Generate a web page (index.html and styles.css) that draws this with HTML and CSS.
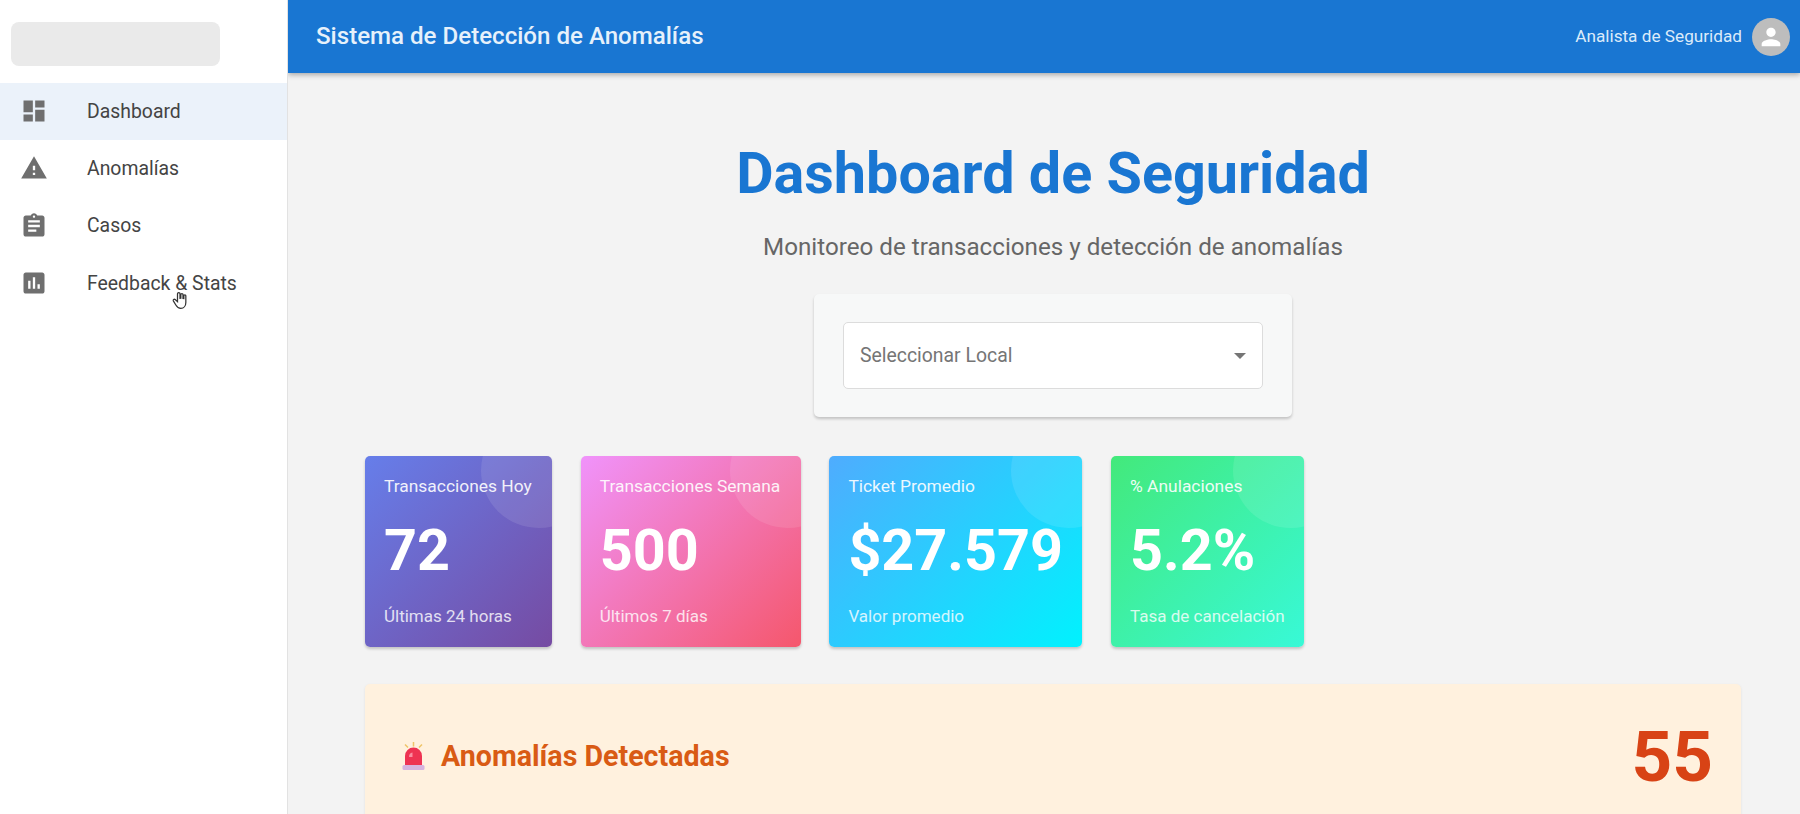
FILE: index.html
```html
<!DOCTYPE html>
<html lang="es">
<head>
  <meta charset="UTF-8">
  <meta name="viewport" content="width=device-width, initial-scale=1.0">
  <title>Sistema de Detección de Anomalías</title>
  <link rel="stylesheet" href="styles.css">
</head>
<body>
  <aside class="sidebar">
    <div class="logo-slot"><div class="logo-blank"></div></div>
    <nav class="nav">
      <a class="nav-item active">
        <svg class="nav-icon" viewBox="0 0 24 24"><path d="M3 13h8V3H3v10zm0 8h8v-6H3v6zm10 0h8V11h-8v10zm0-18v6h8V3h-8z"/></svg>
        <span>Dashboard</span>
      </a>
      <a class="nav-item">
        <svg class="nav-icon" viewBox="0 0 24 24"><path d="M1 21h22L12 2 1 21zm12-3h-2v-2h2v2zm0-4h-2v-4h2v4z"/></svg>
        <span>Anomalías</span>
      </a>
      <a class="nav-item">
        <svg class="nav-icon" viewBox="0 0 24 24"><path d="M19 3h-4.18C14.4 1.84 13.3 1 12 1c-1.3 0-2.4.84-2.82 2H5c-1.1 0-2 .9-2 2v14c0 1.1.9 2 2 2h14c1.1 0 2-.9 2-2V5c0-1.1-.9-2-2-2zm-7 0c.55 0 1 .45 1 1s-.45 1-1 1-1-.45-1-1 .45-1 1-1zm2 14H7v-2h7v2zm3-4H7v-2h10v2zm0-4H7V7h10v2z"/></svg>
        <span>Casos</span>
      </a>
      <a class="nav-item">
        <svg class="nav-icon" viewBox="0 0 24 24"><path d="M19 3H5c-1.1 0-2 .9-2 2v14c0 1.1.9 2 2 2h14c1.1 0 2-.9 2-2V5c0-1.1-.9-2-2-2zM9 17H7v-7h2v7zm4 0h-2V7h2v10zm4 0h-2v-4h2v4z"/></svg>
        <span>Feedback &amp; Stats</span>
      </a>
    </nav>
    <svg class="cursor" viewBox="0 0 24 24"><path d="M9 11V4.5a1.5 1.5 0 0 1 3 0V10l1-.2V5.5a1.3 1.3 0 0 1 2.600 0v4.600l1 .2V7a1.200 1.200 0 0 1 2.400 0v8c0 4-2.500 7-6 7-3 0-4.500-1.300-6-4l-3-5c-.7-1.300 1-2.500 2.200-1.500L9 14z"/></svg>
  </aside>

  <div class="content">
    <header class="topbar">
      <div class="topbar-title">Sistema de Detección de Anomalías</div>
      <div class="user">
        <span>Analista de Seguridad</span>
        <div class="avatar">
          <svg viewBox="0 0 24 24"><path d="M12 12c2.210 0 4-1.790 4-4s-1.790-4-4-4-4 1.790-4 4 1.790 4 4 4zm0 2c-2.670 0-8 1.340-8 4v2h16v-2c0-2.660-5.330-4-8-4z"/></svg>
        </div>
      </div>
    </header>

    <main class="main">
      <h1 class="page-title">Dashboard de Seguridad</h1>
      <p class="page-sub">Monitoreo de transacciones y detección de anomalías</p>

      <div class="filter-panel">
        <div class="select">
          <span>Seleccionar Local</span>
          <div class="caret"></div>
        </div>
      </div>

      <div class="stats">
        <div class="stat stat-purple">
          <div class="stat-label">Transacciones Hoy</div>
          <div class="stat-value">72</div>
          <div class="stat-foot">Últimas 24 horas</div>
        </div>
        <div class="stat stat-pink">
          <div class="stat-label">Transacciones Semana</div>
          <div class="stat-value">500</div>
          <div class="stat-foot">Últimos 7 días</div>
        </div>
        <div class="stat stat-blue">
          <div class="stat-label">Ticket Promedio</div>
          <div class="stat-value">$27.579</div>
          <div class="stat-foot">Valor promedio</div>
        </div>
        <div class="stat stat-green">
          <div class="stat-label">% Anulaciones</div>
          <div class="stat-value">5.2%</div>
          <div class="stat-foot">Tasa de cancelación</div>
        </div>
      </div>

      <section class="anomalies">
        <div class="anomalies-title">
          <svg class="siren" viewBox="0 0 23 28">
            <path d="M11.500 0v4.500M3 2.500l3 3M20 2.500l-3 3" stroke="#efc468" stroke-width="1.500" fill="none"/>
            <path d="M3 24v-10a8.500 8.500 0 0 1 17 0v10z" fill="#ee3352"/>
            <path d="M7 15a4.500 4.500 0 0 1 3.500-4.500v4.500z" fill="#fa8da0"/>
            <rect x="0.500" y="23" width="22" height="5" rx="1.500" fill="#d6b4de"/>
          </svg>
          <span>Anomalías Detectadas</span>
        </div>
        <div class="anomalies-count">55</div>
      </section>
    </main>
  </div>
</body>
</html>
```

FILE: styles.css
```css
* {
  box-sizing: border-box;
}

html, body {
  height: 100%;
}

body {
  display: flex;
  margin: 0;
  overflow: hidden;
  background-color: #f3f3f3;
  font-family: Roboto, Arial, sans-serif;
  color: #444;
}

.sidebar {
  position: relative;
  flex: 0 0 288px;
  background-color: #fff;
  border-right: 1px solid #e2e2e2;
}

.logo-slot {
  height: 82.500px;
  padding: 22px 0 0 11px;
}

.logo-blank {
  width: 209px;
  height: 44px;
  background-color: #eaeaea;
  border-radius: 8px;
}

.nav-item {
  display: flex;
  align-items: center;
  height: 57.300px;
  padding-left: 20px;
  font-size: 19.400px;
}

.nav-item.active {
  background-color: #ebf2fa;
}

.nav-icon {
  flex: 0 0 28px;
  width: 28px;
  height: 28px;
  margin-right: 39px;
  fill: #6f6f6f;
}

.cursor {
  position: absolute;
  top: 288px;
  left: 170px;
  width: 20px;
  height: 24px;
  fill: #fff;
  stroke: #333;
  stroke-width: 1.500;
}

.content {
  flex: 1;
  min-width: 0;
}

.topbar {
  display: flex;
  justify-content: space-between;
  align-items: center;
  height: 73px;
  padding: 0 10px 0 28px;
  background-color: #1976d2;
  color: #fff;
  box-shadow: 0 2px 5px rgba(0, 0, 0, 0.3);
}

.topbar-title {
  margin-top: -1px;
  font-size: 24.100px;
  font-weight: 500;
  color: #e6f1fb;
}

.user {
  display: flex;
  align-items: center;
  gap: 10px;
  font-size: 17.200px;
  color: #dcebfa;
}

.user span {
  margin-top: -1px;
}

.avatar {
  display: flex;
  justify-content: center;
  align-items: center;
  width: 38px;
  height: 38px;
  border-radius: 50%;
  background-color: #bdbdbd;
}

.avatar svg {
  width: 28px;
  height: 28px;
  fill: #fff;
}

.main {
  display: flex;
  flex-direction: column;
  align-items: center;
  padding: 69px 59px 0 77px;
}

.page-title {
  margin: 0;
  font-size: 57.500px;
  line-height: 64px;
  font-weight: 700;
  color: #1976d2;
}

.page-sub {
  margin: 24px 0 0;
  font-size: 24.200px;
  line-height: 34px;
  color: #666;
}

.filter-panel {
  width: 478px;
  margin-top: 30px;
  padding: 28px 29px;
  background-color: #f7f8f8;
  border-radius: 5px;
  box-shadow: 0 2px 3px rgba(0, 0, 0, 0.2);
}

.select {
  display: flex;
  justify-content: space-between;
  align-items: center;
  height: 67px;
  padding: 0 16px;
  background-color: #fff;
  border: 1px solid #dcdcdc;
  border-radius: 5px;
  font-size: 19.400px;
  color: #757575;
}

.select span {
  margin-top: -1px;
}

.caret {
  width: 0;
  height: 0;
  border-left: 6px solid transparent;
  border-right: 6px solid transparent;
  border-top: 6px solid #757575;
}

.stats {
  display: flex;
  align-self: stretch;
  gap: 28.700px;
  margin-top: 39px;
}

.stat {
  position: relative;
  display: flex;
  flex-direction: column;
  height: 191px;
  padding: 18px 0 19px 19px;
  border-radius: 5px;
  overflow: hidden;
  color: #fff;
  box-shadow: 0 2px 3px rgba(0, 0, 0, 0.2);
}

.stat::before {
  content: "";
  position: absolute;
  top: -43px;
  right: -44px;
  width: 115px;
  height: 115px;
  border-radius: 50%;
  background-color: rgba(255, 255, 255, 0.1);
}

.stat-purple {
  width: 187px;
  background: linear-gradient(135deg, #667eea, #764ba2);
}

.stat-pink {
  width: 220px;
  background: linear-gradient(135deg, #f093fb, #f5576c);
}

.stat-blue {
  width: 253px;
  background: linear-gradient(135deg, #4facfe, #00f2fe);
}

.stat-green {
  width: 193px;
  background: linear-gradient(135deg, #43e97b, #38f9d7);
}

.stat-label {
  font-size: 17.400px;
  line-height: 24px;
  white-space: nowrap;
  opacity: 0.9;
}

.stat-value {
  margin-top: 16px;
  font-size: 57.500px;
  line-height: 74px;
  font-weight: 700;
  white-space: nowrap;
}

.stat-foot {
  margin-top: auto;
  font-size: 17px;
  line-height: 24px;
  white-space: nowrap;
  opacity: 0.8;
}

.anomalies {
  display: flex;
  justify-content: space-between;
  align-items: center;
  align-self: stretch;
  height: 144px;
  margin-top: 37px;
  padding: 0 28px 0 37px;
  background-color: #fff1de;
  border-radius: 5px;
  box-shadow: 0 1px 3px rgba(0, 0, 0, 0.08);
}

.anomalies-title {
  display: flex;
  align-items: center;
  gap: 16px;
  font-size: 28.600px;
  font-weight: 700;
  color: #d95b14;
}

.siren {
  width: 23px;
  height: 28px;
}

.anomalies-count {
  font-size: 71px;
  font-weight: 700;
  color: #d84315;
}
```
